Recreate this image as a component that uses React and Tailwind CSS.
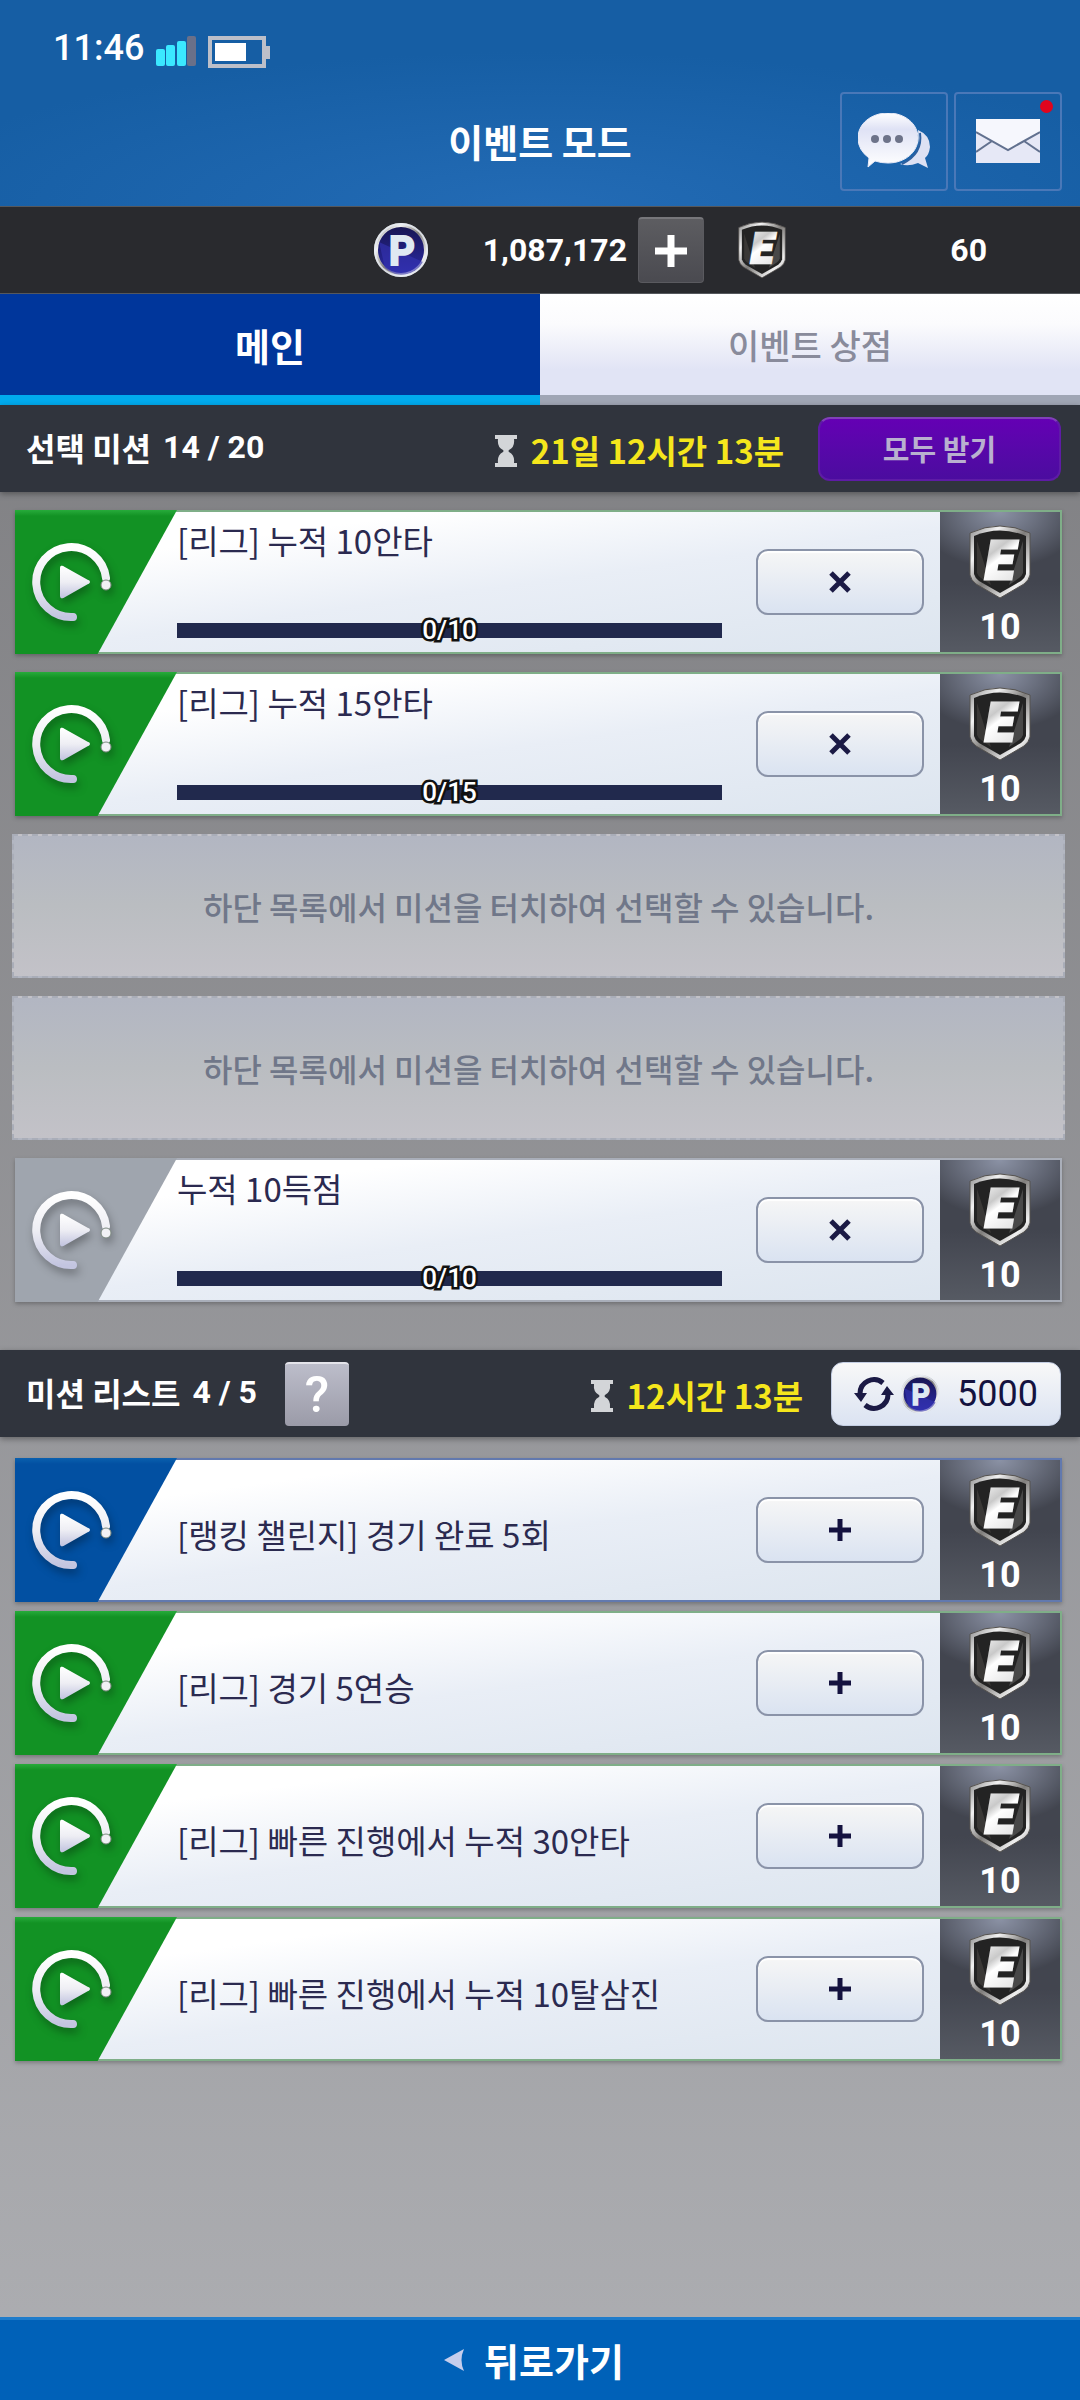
// src/App.jsx
import { useState } from "react";

const SELECTED = [
  { id: "s1", title: "[리그] 누적 10안타", total: 10, tone: "green" },
  { id: "s2", title: "[리그] 누적 15안타", total: 15, tone: "green" },
  { id: "e1", empty: true },
  { id: "e2", empty: true },
  { id: "s3", title: "누적 10득점", total: 10, tone: "gray" },
];

const AVAILABLE = [
  { id: "a1", title: "[랭킹 챌린지] 경기 완료 5회", tone: "blue" },
  { id: "a2", title: "[리그] 경기 5연승", tone: "green" },
  { id: "a3", title: "[리그] 빠른 진행에서 누적 30안타", tone: "green" },
  { id: "a4", title: "[리그] 빠른 진행에서 누적 10탈삼진", tone: "green" },
];

const TONES = {
  green: {
    frame: "border-[#7fae88]",
    emblem: "bg-[linear-gradient(#27ab3b,#129224_6px)]",
  },
  blue: {
    frame: "border-[#6279ae]",
    emblem: "bg-[linear-gradient(#0a60ae,#0250a2_6px)]",
  },
  gray: {
    frame: "border-[#a9aeb9]",
    emblem: "bg-[#9fa5ae]",
  },
};

// Gradients shared by every icon on the page
function IconDefs() {
  return (
    <svg className="absolute h-0 w-0" aria-hidden="true">
      <defs>
        <linearGradient id="ring" x1="0" y1="0" x2="0" y2="1">
          <stop offset="0" stopColor="#fff" />
          <stop offset="0.5" stopColor="#eeeef4" />
          <stop offset="1" stopColor="#c3c5e0" />
        </linearGradient>
        <linearGradient id="chrome" x1="0" y1="0" x2="1" y2="1">
          <stop offset="0" stopColor="#8b8b8b" />
          <stop offset="0.25" stopColor="#f2f2f2" />
          <stop offset="0.5" stopColor="#7f7d7b" />
          <stop offset="0.8" stopColor="#f0f0f0" />
          <stop offset="1" stopColor="#8a8886" />
        </linearGradient>
        <linearGradient id="steel" x1="0" y1="0" x2="0.4" y2="1">
          <stop offset="0" stopColor="#fff" />
          <stop offset="0.4" stopColor="#c9c9c9" />
          <stop offset="0.55" stopColor="#fff" />
          <stop offset="1" stopColor="#e4e4e4" />
        </linearGradient>
        <linearGradient id="navy" x1="0" y1="0" x2="0" y2="1">
          <stop offset="0" stopColor="#171550" />
          <stop offset="1" stopColor="#2b2aa8" />
        </linearGradient>
        <linearGradient id="bubble" x1="0" y1="0" x2="0" y2="1">
          <stop offset="0" stopColor="#fff" />
          <stop offset="0.3" stopColor="#dfe2f5" />
          <stop offset="1" stopColor="#fff" />
        </linearGradient>
      </defs>
    </svg>
  );
}

function ShieldIcon({ className }) {
  return (
    <svg viewBox="0 0 62 74" className={className} aria-hidden="true">
      <path
        d="M1 8Q31 -6 61 8V50Q60 55 55 59L31 73L7 59Q2 55 1 50Z"
        fill="url(#chrome)"
        stroke="#55524f"
        strokeWidth="1"
      />
      <path d="M5 11Q31 0 57 11V49Q56 53 52 56L31 68L10 56Q6 53 5 49Z" fill="#232323" />
      <path d="M8 16L22 60L12 53Q9 51 8 48Z" fill="#3a3836" />
      <path d="M54 16L40 60L50 53Q53 51 54 48Z" fill="#484848" />
      <text
        x="31"
        y="54"
        textAnchor="middle"
        fill="url(#steel)"
        stroke="url(#steel)"
        strokeWidth="3"
        className="font-['Roboto',sans-serif] text-[54px] font-black italic"
      >
        E
      </text>
    </svg>
  );
}

function PointIcon({ className }) {
  return (
    <svg viewBox="0 0 56 56" className={className} aria-hidden="true">
      <circle cx="28" cy="28" r="25" fill="url(#navy)" stroke="url(#chrome)" strokeWidth="4" />
      <path d="M6 20L50 40A24 24 0 0 1 12 46Z" fill="#3633b4" opacity="0.6" />
      <circle cx="28" cy="28" r="26" fill="none" stroke="#e9eef5" strokeWidth="2" opacity="0.8" />
      <text
        x="29"
        y="43"
        textAnchor="middle"
        fill="#dfe9f2"
        stroke="#dfe9f2"
        strokeWidth="2"
        className="font-['Roboto',sans-serif] text-[40px] font-bold"
      >
        P
      </text>
    </svg>
  );
}

function PlayEmblem() {
  return (
    <svg viewBox="0 0 80 80" className="h-20 w-20 drop-shadow-[2px_5px_4px_rgba(0,0,0,0.3)]" aria-hidden="true">
      <path
        d="M41 75A35 35 0 1 1 74 36"
        fill="none"
        stroke="url(#ring)"
        strokeWidth="8"
        strokeLinecap="round"
      />
      <circle cx="74" cy="43" r="5" fill="#f1f1f5" stroke="#7d8a80" strokeWidth="1" />
      <path
        d="M31 25L56 39Q58 40 56 41L31 55Q29 56 29 54V26Q29 24 31 25Z"
        fill="url(#ring)"
        stroke="url(#ring)"
        strokeWidth="2"
      />
    </svg>
  );
}

function Hourglass() {
  return (
    <svg viewBox="0 0 22 32" className="h-8 w-[22px]" fill="#d3d5d8" aria-hidden="true">
      <path d="M0 0H22V4H19Q20 12 14 15Q13 16 14 17Q20 20 19 28H22V32H0V28H3Q2 20 8 17Q9 16 8 15Q2 12 3 4H0Z" />
    </svg>
  );
}

function StatusBar() {
  return (
    <div className="flex h-[76px] items-end gap-3 pb-2 pl-[53px] text-white">
      <span className="font-['Roboto',sans-serif] text-[36px] font-medium leading-10">11:46</span>
      <svg viewBox="0 0 40 30" className="mb-[2px] h-[30px] w-10" aria-label="signal">
        <g fill="#3be8ff">
          <rect x="0" y="13" width="9" height="17" rx="2" />
          <rect x="10" y="9" width="9" height="21" rx="2" />
          <rect x="21" y="5" width="9" height="25" rx="2" />
        </g>
        <rect x="31" y="0" width="9" height="30" rx="2" fill="#6a7089" />
      </svg>
      <svg viewBox="0 0 62 32" className="h-8 w-[62px]" aria-label="battery">
        <rect x="2" y="2" width="54" height="28" fill="none" stroke="#bcbfc9" strokeWidth="4" />
        <rect x="58" y="10" width="4" height="13" fill="#bcbfc9" />
        <rect x="7" y="7" width="31" height="18" fill="#fff" />
      </svg>
    </div>
  );
}

function Header() {
  return (
    <header className="bg-[radial-gradient(ellipse_60%_75%_at_50%_100%,#236bb5,#165ea4)]">
      <StatusBar />
      <div className="grid h-[130px] grid-cols-[1fr_auto_1fr] items-center px-[18px]">
        <h1 className="col-start-2 text-[38px] font-bold leading-none text-white">이벤트 모드</h1>
        <div className="flex justify-end gap-[6px]">
          <button
            type="button"
            aria-label="chat"
            className="flex h-[99px] w-[108px] items-center justify-center rounded-sm border-2 border-[#4a78b8]"
          >
            <svg viewBox="0 0 72 56" className="h-14 w-[72px]" aria-hidden="true">
              <path
                d="M60 17Q72 22 72 34Q71 42 67 45L70 55L60 50Q50 54 42 51Q58 46 61 32Z"
                fill="#dde1f3"
              />
              <path
                d="M30 0C47 0 60 11 60 25S47 50 30 50Q23 50 17 48L10 54L11 45Q0 37 0 25C0 11 13 0 30 0Z"
                fill="url(#bubble)"
                stroke="#e9ebf8"
                strokeWidth="1"
              />
              <path d="M62 20Q65 41 44 51" fill="none" stroke="#2d5f9f" strokeWidth="2" />
              <g fill="#6d7389">
                <circle cx="17" cy="26" r="4" />
                <circle cx="29" cy="26" r="4" />
                <circle cx="41" cy="26" r="4" />
              </g>
            </svg>
          </button>
          <button
            type="button"
            aria-label="mail"
            className="relative flex h-[99px] w-[108px] items-center justify-center rounded-sm border-2 border-[#4a78b8]"
          >
            <svg viewBox="0 0 64 44" className="h-11 w-16" aria-hidden="true">
              <rect width="64" height="44" fill="#e6e8f6" />
              <path d="M0 0H64V12L33 31L0 12Z" fill="#f6f7fd" />
              <path d="M0 13L32 31L64 13M0 33L16 22M64 33L48 22" fill="none" stroke="#62718f" strokeWidth="2" />
            </svg>
            <span className="absolute right-[7px] top-[6px] h-[13px] w-[13px] rounded-full bg-[#e0051d]" />
          </button>
        </div>
      </div>
    </header>
  );
}

function ResourceBar() {
  const amount = "font-['Roboto',sans-serif] text-[32px] font-bold leading-none text-white";
  return (
    <div className="flex h-[88px] items-center justify-end border-y border-[#55585d] bg-[#292a2e] pr-[93px]">
      <PointIcon className="h-14 w-14" />
      <span className={`${amount} w-[198px] text-right`}>1,087,172</span>
      <button
        type="button"
        aria-label="add points"
        className="ml-[11px] flex h-[66px] w-[66px] items-center justify-center rounded border border-t-2 border-[#5a5a5f] border-t-[#77777b] bg-linear-to-b from-[#5d5d61] to-[#4a4a50]"
      >
        <svg viewBox="0 0 32 32" className="h-8 w-8" aria-hidden="true">
          <path d="M16 0V32M0 16H32" stroke="#fff" strokeWidth="7" />
        </svg>
      </button>
      <ShieldIcon className="ml-[34px] h-[58px] w-12" />
      <span className={`${amount} w-[201px] text-right`}>60</span>
    </div>
  );
}

function Tabs({ tab, onChange }) {
  const base = "flex h-[111px] flex-1 items-center justify-center border-b-[10px] leading-none";
  const active = "border-[#00abee] bg-[#00369b] text-[38px] font-bold text-white";
  const idle =
    "border-[#a0a6b5] bg-[linear-gradient(#fff,#fbfbfd_30%,#e1e4f5_75%)] text-[34px] font-medium text-[#898b9b]";
  return (
    <nav className="flex" role="tablist">
      <button
        type="button"
        role="tab"
        aria-selected={tab === "main"}
        onClick={() => onChange("main")}
        className={`${base} ${tab === "main" ? active : idle}`}
      >
        메인
      </button>
      <button
        type="button"
        role="tab"
        aria-selected={tab === "shop"}
        onClick={() => onChange("shop")}
        className={`${base} ${tab === "shop" ? active : idle}`}
      >
        이벤트 상점
      </button>
    </nav>
  );
}

function SectionBar({ title, count, time, help, children }) {
  return (
    <div className="flex h-[87px] items-center bg-[#30343d] pl-[26px] pr-[19px] shadow-[0_2px_6px_rgba(0,0,0,0.35)]">
      <h2 className="flex items-center gap-3 pb-1 text-[32px] font-bold leading-none text-white">
        {title}
        <span className="font-['Roboto',sans-serif] text-[32px] font-bold leading-none">{count}</span>
      </h2>
      {help && (
        <button
          type="button"
          aria-label="help"
          className="ml-7 flex h-16 w-16 items-center justify-center rounded border-t-2 border-[#e4e4ea] bg-linear-to-b from-[#bcbdca] to-[#9b9ba8] font-['Roboto',sans-serif] text-[50px] font-medium leading-none text-white"
        >
          ?
        </button>
      )}
      <div className="ml-auto flex items-center gap-[14px] pt-1">
        <Hourglass />
        <span className="text-[33px] font-bold leading-none text-[#f5e61c]">{time}</span>
      </div>
      {children}
    </div>
  );
}

function EmptySlot() {
  return (
    <li className="mx-[-3px] flex h-36 items-center justify-center border-2 border-dashed border-[#a9adb8] bg-linear-to-b from-[#b2b6c2] via-[#babdc1] to-[#c3c2c8] text-[32px] font-medium leading-none text-[#707789]">
      하단 목록에서 미션을 터치하여 선택할 수 있습니다.
    </li>
  );
}

function MissionCard({ mission, kind }) {
  const tone = TONES[mission.tone];
  const selected = kind === "selected";
  return (
    <li
      className={`flex h-36 border-2 bg-linear-to-br from-white from-20% via-[#e9eef6] to-[#dbe4ee] shadow-[0_2px_4px_rgba(0,0,0,0.25)] ${tone.frame}`}
    >
      <div
        className={`-my-[2px] -ml-[2px] flex w-[162px] shrink-0 items-center pl-[17px] [clip-path:polygon(0_0,100%_0,51%_100%,0_100%)] ${tone.emblem}`}
      >
        <PlayEmblem />
      </div>
      {selected ? (
        <div className="flex min-w-0 flex-1 flex-col justify-between pb-2 pt-[10px]">
          <h3 className="text-[33px] font-normal leading-9 text-[#2b2a50]">{mission.title}</h3>
          <div
            role="progressbar"
            aria-label={mission.title}
            aria-valuemin={0}
            aria-valuemax={mission.total}
            aria-valuenow={0}
            className="flex h-7 items-center"
          >
            <div className="flex h-[15px] flex-1 items-center justify-center bg-[#21294d]">
              <span className="font-['Roboto',sans-serif] text-[26px] font-medium leading-none text-white [-webkit-text-stroke:5px_#111] [paint-order:stroke]">
                0/{mission.total}
              </span>
            </div>
          </div>
        </div>
      ) : (
        <h3 className="flex min-w-0 flex-1 items-center pt-2 text-[33px] font-normal leading-9 text-[#2b2a50]">
          {mission.title}
        </h3>
      )}
      <button
        type="button"
        aria-label={selected ? "remove mission" : "add mission"}
        className="ml-[34px] mr-4 h-[66px] w-[168px] shrink-0 self-center rounded-xl border-2 border-[#8a93a8] bg-linear-to-b from-[#f6f6f6] to-[#dae3f1] shadow-[inset_0_2px_1px_#fff]"
      >
        <svg viewBox="0 0 22 22" className="mx-auto h-[22px] w-[22px]" aria-hidden="true">
          {selected ? (
            <path d="M2 2L20 20M20 2L2 20" stroke="#1b1a45" strokeWidth="5" />
          ) : (
            <path d="M11 0V22M0 11H22" stroke="#14123f" strokeWidth="5" />
          )}
        </svg>
      </button>
      <div className="flex w-[120px] shrink-0 flex-col items-center bg-[radial-gradient(ellipse_70%_40%_at_50%_0%,#8b92a5,transparent),linear-gradient(#42454f,#42454f_50%,#565a63)] pt-[13px]">
        <ShieldIcon className="h-[74px] w-[62px]" />
        <span className="mt-2 font-['Roboto',sans-serif] text-[36px] font-bold leading-10 text-white">10</span>
      </div>
    </li>
  );
}

export default function App() {
  const [tab, setTab] = useState("main");

  return (
    <div className="flex min-h-screen flex-col bg-linear-to-b from-[#78787b] to-[#adaeb2] font-['Noto_Sans_CJK_KR',sans-serif]">
      <IconDefs />
      <Header />
      <ResourceBar />
      <Tabs tab={tab} onChange={setTab} />

      <main className="flex-1">
        <SectionBar title="선택 미션" count="14 / 20" time="21일 12시간 13분">
          <button
            type="button"
            className="ml-[34px] h-16 w-[243px] rounded-xl border-2 border-[#5e1ba6] border-t-[#8040b8] bg-linear-to-b from-[#6400b4] to-[#4b0c9f] text-[29px] font-bold leading-none text-[#b9b0cf]"
          >
            모두 받기
          </button>
        </SectionBar>
        <ul className="flex flex-col gap-[18px] px-[15px] pb-12 pr-[18px] pt-[18px]">
          {SELECTED.map((m) =>
            m.empty ? <EmptySlot key={m.id} /> : <MissionCard key={m.id} mission={m} kind="selected" />
          )}
        </ul>

        <SectionBar title="미션 리스트" count="4 / 5" time="12시간 13분" help>
          <button
            type="button"
            aria-label="refresh for 5000 points"
            className="ml-7 flex h-16 w-[230px] items-center rounded-xl border border-[#c3cde2] bg-linear-to-b from-[#f8f8f8] to-[#dbe3f2] pl-[22px] pr-[22px] text-[#14123f]"
          >
            <svg viewBox="0 0 40 34" className="h-[34px] w-10" aria-hidden="true">
              <path
                d="M6 17A14 14 0 0 1 29 6M34 17A14 14 0 0 1 11 28"
                fill="none"
                stroke="#1b1a45"
                strokeWidth="5"
              />
              <path d="M0 16H13L7 25ZM27 18H40L33 9Z" fill="#1b1a45" />
            </svg>
            <PointIcon className="ml-[6px] h-10 w-10" />
            <span className="ml-auto font-['Roboto',sans-serif] text-[36px] leading-none">5000</span>
          </button>
        </SectionBar>
        <ul className="flex flex-col gap-[9px] px-[15px] pb-10 pr-[18px] pt-[21px]">
          {AVAILABLE.map((m) => (
            <MissionCard key={m.id} mission={m} kind="available" />
          ))}
        </ul>
      </main>

      <footer>
        <button
          type="button"
          className="flex h-[83px] w-full items-center justify-center gap-5 border-t-[3px] border-[#1f7cca] bg-[#0061b8] pr-3 text-[38px] font-bold leading-none text-white"
        >
          <svg viewBox="0 0 20 22" className="h-[22px] w-5" aria-hidden="true">
            <path d="M20 0Q15 11 20 22L0 11Z" fill="#c5cdec" />
          </svg>
          뒤로가기
        </button>
      </footer>
    </div>
  );
}
